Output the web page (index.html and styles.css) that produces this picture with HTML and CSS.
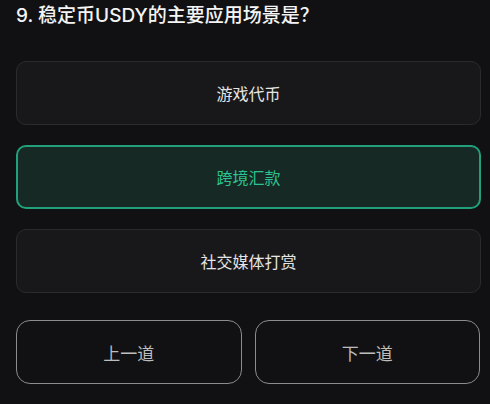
FILE: index.html
```html
<!DOCTYPE html>
<html lang="zh-CN">
<head>
  <meta charset="UTF-8">
  <meta name="viewport" content="width=device-width, initial-scale=1.0">
  <title>答题</title>
  <link rel="stylesheet" href="styles.css">
</head>
<body>
  <h1 class="question">9. 稳定币USDY的主要应用场景是？</h1>

  <div class="options">
    <div class="option">游戏代币</div>
    <div class="option selected">跨境汇款</div>
    <div class="option">社交媒体打赏</div>
  </div>

  <div class="nav">
    <button class="nav-btn">上一道</button>
    <button class="nav-btn">下一道</button>
  </div>
</body>
</html>
```

FILE: styles.css
```css
body {
  margin: 0;
  padding: 0 9px 0 16px;
  background-color: #111113;
  color: #f2f2f2;
  font-family: Inter, "Noto Sans CJK SC", sans-serif;
}
.question {
  margin: 0;
  font-size: 19px;
  font-weight: 500;
  line-height: 32px;
  color: #f4f4f4;
}
.options {
  margin-top: 29px;
  display: flex;
  flex-direction: column;
  gap: 20px;
}
.option {
  box-sizing: border-box;
  height: 64px;
  display: flex;
  align-items: center;
  justify-content: center;
  background-color: #18181a;
  border: 1.5px solid #2b2b2e;
  border-radius: 10px;
  font-size: 16px;
  color: #e6e6e6;
}
.option.selected {
  background-color: #162925;
  border: 2px solid #22a07c;
  color: #2dc390;
}
.nav {
  margin-top: 27px;
  display: flex;
  gap: 13px;
  padding-right: 1px;
}
.nav-btn {
  flex: 1;
  height: 64px;
  background: transparent;
  border: 1.5px solid #8c8c8e;
  border-radius: 14px;
  color: #bdbdbd;
  font-family: inherit;
  font-size: 17px;
  cursor: pointer;
}
```
